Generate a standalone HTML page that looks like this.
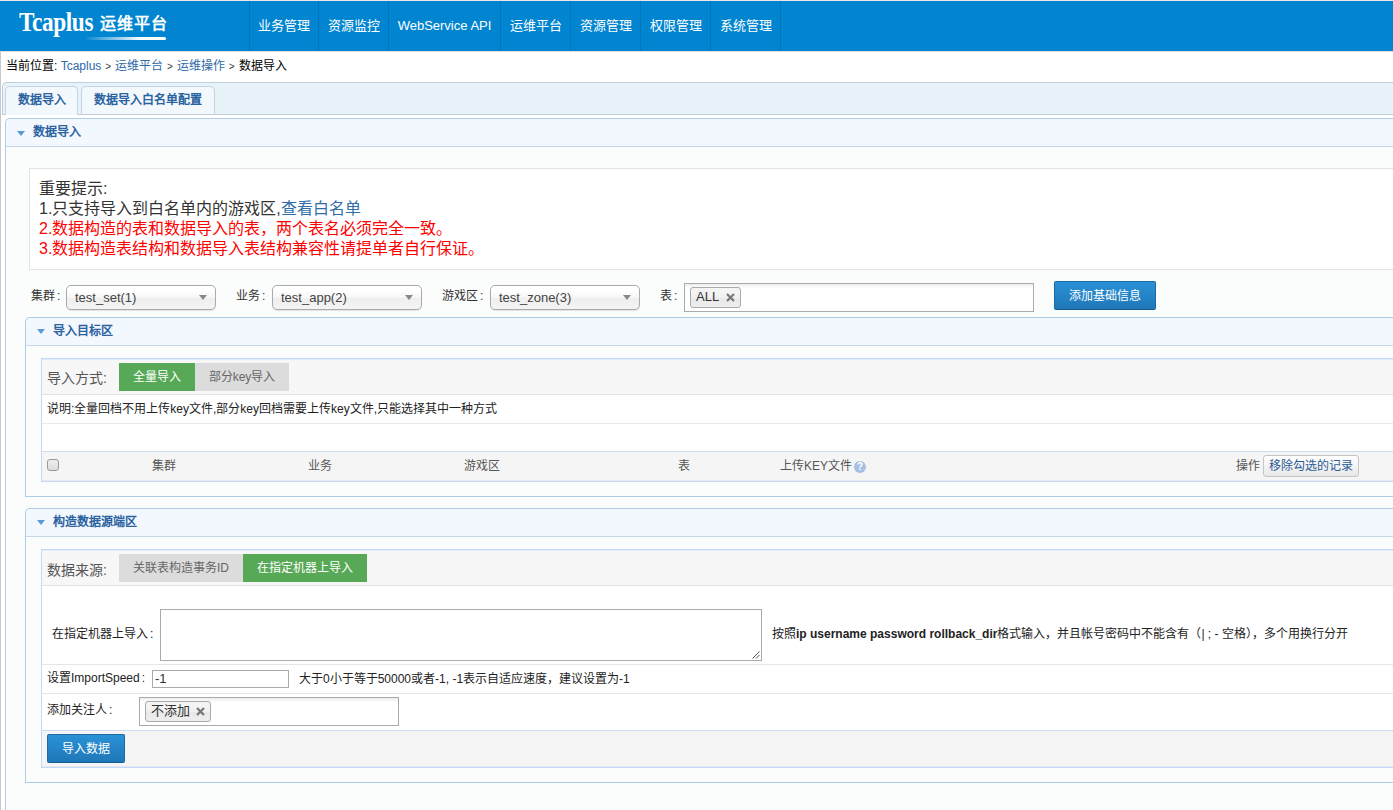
<!DOCTYPE html>
<html lang="zh-CN"><head><meta charset="utf-8">
<style>
*{box-sizing:border-box;margin:0;padding:0}
html,body{width:1393px;height:810px;overflow:hidden;background:#fff}
body{position:relative;font-family:"Liberation Sans",sans-serif;font-size:12px;color:#333}
.a{position:absolute;white-space:nowrap}
#topline{left:0;top:0;width:1393px;height:1px;background:#efe6e1}
#hdr{left:0;top:1px;width:1393px;height:50px;background:#0185d1}
#hdrline{left:0;top:51px;width:1393px;height:1px;background:#e6dcd6}
#leftb{left:0;top:52px;width:1px;height:758px;background:#c8c8c8}
.sep{top:1px;width:1px;height:50px;background:#0276bc}
.nav{top:1px;height:50px;line-height:50px;color:#fff;font-size:13px;text-align:center}
#logo{left:19px;top:6px;font-family:"Liberation Serif",serif;font-weight:bold;font-size:25px;line-height:30px;color:#fff;letter-spacing:-0.4px;transform:scaleX(0.93) scaleY(1.1);transform-origin:0 0}
#logo2{left:100px;top:14px;font-size:16px;font-weight:bold;color:#fff;letter-spacing:1px;line-height:20px}
#swoosh{left:84px;top:37px;width:82px;height:3px;border-radius:0 2px 2px 0;background:linear-gradient(to right,rgba(255,255,255,0),#fff 70%)}
#crumb{left:6px;top:58px;line-height:16px;font-size:12px;color:#000}
#crumb .l{color:#2d69a8}
#crumb .g{font-size:10px;padding:0 0.6px;color:#333;vertical-align:0.5px}
#tabbar{left:2px;top:82px;width:1500px;height:33px;background:#e8f2f9;border:1px solid #bfcddd;border-right:0;border-radius:5px 0 0 0}
.tab{top:86px;height:29px;background:#f3f8fd;border:1px solid #c3d4e8;border-bottom:0;border-radius:5px 5px 0 0;color:#2b63a0;font-weight:bold;font-size:12px;line-height:26px;text-align:center}
.panel{border:1px solid #aecce6;border-right:0;border-radius:5px 0 0 0;background:#fafdfc}
.phead{position:absolute;left:0;top:0;width:100%;height:28px;background:#f3f8fe;border-bottom:1px solid #c2d8e8;border-radius:5px 0 0 0}
.tri{position:absolute;width:0;height:0;border-left:4px solid transparent;border-right:4px solid transparent;border-top:5px solid #5a9bd3}
.ptitle{position:absolute;font-weight:bold;color:#2b63a0;font-size:12px;line-height:16px}
#notice{left:29px;top:168px;width:1400px;height:102px;background:#fff;border:1px solid #e3e3e3;border-right:0;font-size:16px;line-height:20px}
.lbl{font-size:12px;color:#333;line-height:16px}
s{text-decoration:none;margin-left:2px}
.chosen{height:25px;border:1px solid #aaa;border-radius:5px;background:linear-gradient(#fff 20%,#f6f6f6 50%,#eee 52%,#f4f4f4 100%);box-shadow:0 1px 1px rgba(0,0,0,.1);font-size:13px;color:#444;line-height:23px;padding-left:8px}
.chosen i{position:absolute;right:8px;top:9px;width:0;height:0;border-left:4px solid transparent;border-right:4px solid transparent;border-top:5px solid #888}
.multi{border:1px solid #aaa;background:linear-gradient(#eee 1%,#fff 15%)}
.chip{position:absolute;border:1px solid #aaa;border-radius:3px;background:linear-gradient(#f4f4f4 20%,#f0f0f0 50%,#e8e8e8 52%,#eee 100%);color:#333;font-size:13px;line-height:18px;padding-left:5px}
.chip b{position:absolute;line-height:0}
.btnb{border:1px solid #1c6aa3;border-bottom-color:#175b8e;border-radius:2px;background:linear-gradient(#2a92d6,#1f77b8);color:#fff;font-size:12px;text-align:center}
.tbl{background:#fff;border:1px solid #c4d8fd;border-right:0}
.row{position:absolute;left:0;width:100%}
.gbtn{position:absolute;font-size:12px;text-align:center;line-height:28px}
</style></head><body>
<div class="a" id="topline"></div>
<div class="a" id="hdr"></div>
<div class="a" id="hdrline"></div>
<div class="a" id="leftb"></div>
<div class="a" id="logo">Tcaplus</div>
<div class="a" id="logo2">运维平台</div>
<div class="a" id="swoosh"></div>

<div class="a sep" style="left:249px"></div>
<div class="a sep" style="left:318px"></div>
<div class="a sep" style="left:388px"></div>
<div class="a sep" style="left:500px"></div>
<div class="a sep" style="left:570px"></div>
<div class="a sep" style="left:640px"></div>
<div class="a sep" style="left:710px"></div>
<div class="a sep" style="left:780px"></div>
<div class="a nav" style="left:250px;width:68px">业务管理</div>
<div class="a nav" style="left:319px;width:69px">资源监控</div>
<div class="a nav" style="left:389px;width:111px">WebService API</div>
<div class="a nav" style="left:501px;width:69px">运维平台</div>
<div class="a nav" style="left:571px;width:69px">资源管理</div>
<div class="a nav" style="left:641px;width:69px">权限管理</div>
<div class="a nav" style="left:711px;width:69px">系统管理</div>

<div class="a" id="crumb">当前位置: <span class="l">Tcaplus</span> <span class="g">&gt;</span> <span class="l">运维平台</span> <span class="g">&gt;</span> <span class="l">运维操作</span> <span class="g">&gt;</span> 数据导入</div>

<div class="a" id="tabbar"></div>
<div class="a tab" style="left:5px;width:73px">数据导入</div>
<div class="a tab" style="left:81px;width:134px;height:28px">数据导入白名单配置</div>

<!-- main panel -->
<div class="a panel" style="left:5px;top:118px;width:1500px;height:800px">
  <div class="phead"></div>
  <div class="tri" style="left:11px;top:12px"></div>
  <div class="ptitle" style="left:27px;top:5px">数据导入</div>
</div>

<div class="a" id="notice">
  <div class="a" style="left:9px;top:10px">重要提示:</div>
  <div class="a" style="left:9px;top:30px">1.只支持导入到白名单内的游戏区,<span style="color:#2f6ea8">查看白名单</span></div>
  <div class="a" style="left:9px;top:50px;color:#f00">2.数据构造的表和数据导入的表，两个表名必须完全一致。</div>
  <div class="a" style="left:9px;top:70px;color:#f00">3.数据构造表结构和数据导入表结构兼容性请提单者自行保证。</div>
</div>

<!-- form row -->
<div class="a lbl" style="left:31px;top:288px">集群<s>:</s></div>
<div class="a chosen" style="left:66px;top:285px;width:150px">test_set(1)<i></i></div>
<div class="a lbl" style="left:236px;top:288px">业务<s>:</s></div>
<div class="a chosen" style="left:272px;top:285px;width:150px">test_app(2)<i></i></div>
<div class="a lbl" style="left:442px;top:288px">游戏区<s>:</s></div>
<div class="a chosen" style="left:490px;top:285px;width:150px">test_zone(3)<i></i></div>
<div class="a lbl" style="left:660px;top:288px">表<s>:</s></div>
<div class="a multi" style="left:684px;top:283px;width:350px;height:29px"></div>
<div class="chip" style="left:690px;top:287px;width:51px;height:21px">ALL<b style="left:35px;top:5px"><svg width="9" height="9" viewBox="0 0 9 9"><path d="M1 1L8 8M8 1L1 8" stroke="#777" stroke-width="2.2" stroke-linecap="butt"/></svg></b></div>
<div class="a btnb" style="left:1054px;top:281px;width:102px;height:29px;line-height:29px">添加基础信息</div>

<!-- sub panel 1 -->
<div class="a panel" style="left:25px;top:317px;width:1500px;height:180px">
  <div class="phead"></div>
  <div class="tri" style="left:11px;top:11px"></div>
  <div class="ptitle" style="left:27px;top:5px">导入目标区</div>
</div>
<div class="a tbl" style="left:41px;top:358px;width:1400px;height:124px">
  <div class="row" style="top:0;height:36px;background:#f7f7f7;border-bottom:1px solid #e3e3e3;box-shadow:inset 0 1px 0 #e3ebf6"></div>
  <div class="a" style="left:5px;top:11px;font-size:14px;color:#555;line-height:16px">导入方式:</div>
  <div class="gbtn" style="left:77px;top:4px;width:76px;height:28px;background:#57a957;color:#fff">全量导入</div>
  <div class="gbtn" style="left:153px;top:4px;width:94px;height:28px;background:#dcdcdc;color:#666">部分key导入</div>
  <div class="a" style="left:5px;top:42px;line-height:16px;color:#222">说明:全量回档不用上传key文件,部分key回档需要上传key文件,只能选择其中一种方式</div>
  <div class="row" style="top:64px;height:1px;background:#eaeaea"></div>
  <div class="row" style="top:92px;height:30px;background:#f5f5f5;border-top:1px solid #cddcf0;box-shadow:inset 0 -1px 0 #e9e9e9"></div>
  <div class="a" style="left:5px;top:100px;width:12px;height:12px;border:1px solid #999;border-radius:3px;background:linear-gradient(#eee,#ddd)"></div>
  <div class="a" style="left:110px;top:99px;line-height:16px;color:#555">集群</div>
  <div class="a" style="left:266px;top:99px;line-height:16px;color:#555">业务</div>
  <div class="a" style="left:422px;top:99px;line-height:16px;color:#555">游戏区</div>
  <div class="a" style="left:636px;top:99px;line-height:16px;color:#555">表</div>
  <div class="a" style="left:738px;top:99px;line-height:16px;color:#555">上传KEY文件</div>
  <div class="a" style="left:812px;top:102px;width:12px;height:12px;border-radius:6px;background:#a5c0e2;color:#fff;font-size:10px;font-weight:bold;line-height:12px;text-align:center">?</div>
  <div class="a" style="left:1194px;top:99px;line-height:16px;color:#555">操作</div>
  <div class="a" style="left:1221px;top:96px;width:96px;height:22px;border:1px solid #c5c5c5;border-radius:3px;background:linear-gradient(#fff,#e8e8e8);color:#2b5a92;line-height:20px;text-align:center">移除勾选的记录</div>
</div>

<!-- sub panel 2 -->
<div class="a panel" style="left:25px;top:508px;width:1500px;height:275px">
  <div class="phead"></div>
  <div class="tri" style="left:11px;top:11px"></div>
  <div class="ptitle" style="left:27px;top:5px">构造数据源端区</div>
</div>
<div class="a tbl" style="left:41px;top:549px;width:1400px;height:219px">
  <div class="row" style="top:0;height:36px;background:#f7f7f7;border-bottom:1px solid #e3e3e3;box-shadow:inset 0 1px 0 #e3ebf6"></div>
  <div class="a" style="left:5px;top:12px;font-size:14px;color:#555;line-height:16px">数据来源:</div>
  <div class="gbtn" style="left:77px;top:4px;width:124px;height:28px;background:#dcdcdc;color:#666">关联表构造事务ID</div>
  <div class="gbtn" style="left:201px;top:4px;width:124px;height:28px;background:#57a957;color:#fff">在指定机器上导入</div>
  <div class="a" style="left:10px;top:76px;line-height:16px;color:#222">在指定机器上导入<s>:</s></div>
  <div class="a" style="left:118px;top:59px;width:602px;height:52px;border:1px solid #aaa;background:#fff"><svg style="position:absolute;right:1px;bottom:1px" width="9" height="9" viewBox="0 0 9 9"><path d="M8.5 1.5L1.5 8.5M8.5 5L5 8.5" stroke="#555" stroke-width="1"/></svg></div>
  <div class="a" style="left:730px;top:76px;line-height:16px;color:#222">按照<b>ip username password rollback_dir</b>格式输入，并且帐号密码中不能含有（| ; - 空格），多个用换行分开</div>
  <div class="row" style="top:114px;height:1px;background:#e6e6e6"></div>
  <div class="a" style="left:5px;top:120px;line-height:16px;color:#222">设置ImportSpeed<s>:</s></div>
  <div class="a" style="left:110px;top:120px;width:137px;height:18px;border:1px solid #aaa;background:#fff;font-size:13px;line-height:16px;padding-left:2px">-1</div>
  <div class="a" style="left:257px;top:121px;line-height:16px;color:#222">大于0小于等于50000或者-1, -1表示自适应速度，建议设置为-1</div>
  <div class="row" style="top:143px;height:1px;background:#e6e6e6"></div>
  <div class="a" style="left:5px;top:152px;line-height:16px;color:#222">添加关注人<s>:</s></div>
  <div class="a multi" style="left:97px;top:147px;width:260px;height:29px"></div>
  <div class="chip" style="left:103px;top:151px;width:66px;height:21px">不添加<b style="left:50px;top:5px"><svg width="9" height="9" viewBox="0 0 9 9"><path d="M1 1L8 8M8 1L1 8" stroke="#777" stroke-width="2.2" stroke-linecap="butt"/></svg></b></div>
  <div class="row" style="top:180px;height:37px;background:#f5f5f5;border-top:1px solid #cddcf0;box-shadow:inset 0 -1px 0 #e9e9e9"></div>
  <div class="a btnb" style="left:5px;top:184px;width:78px;height:29px;line-height:28px">导入数据</div>
</div>

</body></html>
